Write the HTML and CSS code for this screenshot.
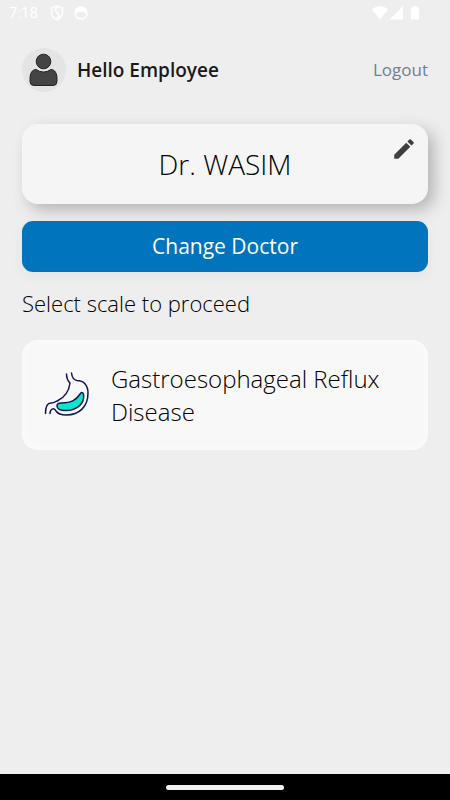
FILE: index.html
```html
<!DOCTYPE html>
<html lang="en">
<head>
  <meta charset="utf-8">
  <meta name="viewport" content="width=device-width, initial-scale=1">
  <title>Select scale</title>
  <link rel="stylesheet" href="styles.css">
</head>
<body>
  <div class="status-bar">
    <div class="status-group">
      <span class="clock">7:18</span>
      <svg class="shield" width="14" height="16" viewBox="0 0 14 16" aria-hidden="true">
        <path d="M7 1 12.500 3v4.500c0 3.400-2.200 5.800-5.500 7.300-3.300-1.500-5.500-3.900-5.500-7.300V3z" fill="none" stroke="#fff" stroke-width="1.500"/>
        <path d="M8 2C4.500 3.500 4.500 5.500 7 7.500s3 4 0 6" fill="none" stroke="#fff" stroke-width="1.500"/>
      </svg>
      <svg width="14" height="14" viewBox="0 0 14 14" aria-hidden="true">
        <circle cx="7" cy="7" r="6.200" fill="none" stroke="#fff" stroke-width="1.300"/>
        <path d="M1 6C1.500 2.500 4 1 7 1s5.500 1.500 6 5l-1.500 1.500-1.500-1-1-1.500-1 1H6L5 5 4 6.500l-1.500 1z" fill="#fff"/>
        <path d="M3.500 11.500c2 1.500 5 1.500 7 0" fill="none" stroke="#fff" stroke-width="1.300"/>
      </svg>
    </div>
    <div class="status-group">
      <svg width="48" height="14" viewBox="0 0 48 14" aria-hidden="true">
        <path d="M0 3.500C4.500-1 11.500-1 16 3.500L8 13.500zM31 0v13.500H17.500zM41 0h4v1.500h2v12h-8V1.500h2z" fill="#fff"/>
      </svg>
    </div>
  </div>

  <main class="screen">
    <header class="profile">
      <svg width="44" height="44" viewBox="0 0 44 44" aria-hidden="true">
        <circle cx="22" cy="22" r="22" fill="#e4e4e4"/>
        <circle cx="21.500" cy="13.500" r="7.300" fill="#444" stroke="#222"/>
        <path d="M14 21.500q7.500 5 15 0c4 0 6 4 6 9v3q0 4-4 4H12q-4 0-4-4v-3c0-5 2-9 6-9z" fill="#444" stroke="#222"/>
      </svg>
      <h1 class="greeting">Hello Employee</h1>
      <a class="logout" href="#">Logout</a>
    </header>

    <section class="doctor-card">
      <h2 class="doctor-name">Dr. WASIM</h2>
      <button class="edit" type="button" aria-label="Edit doctor">
        <svg width="26" height="26" viewBox="0 0 24 24" aria-hidden="true">
          <path d="M3 17.250V21h3.750L17.810 9.940l-3.750-3.750zM20.710 7.040a1 1 0 0 0 0-1.410l-2.340-2.340a1 1 0 0 0-1.410 0l-1.830 1.830 3.750 3.750z" fill="#3f3f3f"/>
        </svg>
      </button>
    </section>

    <button class="change" type="button">Change Doctor</button>
    <h2 class="prompt">Select scale to proceed</h2>

    <a class="scale-card" href="#">
      <svg width="46" height="46" viewBox="0 0 46 46" fill="none" stroke="#14174d" stroke-width="1.500" stroke-linecap="round" stroke-linejoin="round" aria-hidden="true">
        <path d="M22.500 2c0 5 1.500 7 3.500 9-1 8-6 14.500-12 17.500-3 1.500-4 2.500-7 2.500C3 31 1.500 35 1.500 41.500"/>
        <path d="M27.500 1c.5 4 2 7 5.500 7.500 7 0 11 5 11 12.500C44 34 36 43 22 43c-5 0-8-1-10-4-2-4-6-2-6 2.500"/>
        <path d="M39.500 22c1.500 9-6 16.500-17.500 16.500-5 0-9-1.500-9-4.500 0-2 2-3 4-3 11 0 15-3 19.500-9.500 1-1.500 2.500-1 3 .5z" fill="#08e8cf"/>
      </svg>
      <span class="scale-name">Gastroesophageal Reflux Disease</span>
    </a>
  </main>

  <footer class="nav-bar"><span class="nav-handle"></span></footer>
</body>
</html>
```
FILE: styles.css
```css
* {
  box-sizing: border-box;
}

body {
  display: flex;
  flex-direction: column;
  min-height: 100vh;
  margin: 0;
  background: #eee;
  color: #000;
  font-family: "Open Sans", "Noto Sans", sans-serif;
  font-weight: 300;
}

h1,
h2 {
  margin: 0;
}

svg {
  display: block;
  flex: none;
}

a {
  color: inherit;
  text-decoration: none;
}

button {
  padding: 0;
  border: 0;
  font: inherit;
  cursor: pointer;
}

.status-bar {
  display: flex;
  justify-content: space-between;
  align-items: center;
  height: 26px;
  padding: 0 30px 0 9px;
  color: #fff;
}

.status-group {
  display: flex;
  align-items: center;
  gap: 10px;
}

.clock {
  font: 400 15px/20px Roboto, sans-serif;
}

.shield {
  margin-left: 2px;
}

.screen {
  flex: 1;
  padding: 22px 22px 24px;
}

.profile {
  display: flex;
  align-items: center;
  height: 44px;
}

.greeting {
  flex: 1;
  margin-left: 11px;
  color: #1a1a1a;
  font-size: 19px;
  font-weight: 600;
  line-height: 26px;
}

.logout {
  color: #708090;
  font-size: 17px;
  font-weight: 400;
  line-height: 24px;
}

.doctor-card {
  position: relative;
  margin-top: 32px;
  padding: 20px;
  border-radius: 16px;
  background: #f5f5f5;
  box-shadow: 6px 6px 16px #b4b4b4, -6px -6px 16px #f0f0f0;
  text-align: center;
}

.doctor-name {
  font-size: 28px;
  font-weight: 300;
  line-height: 40px;
}

.edit {
  position: absolute;
  top: 12px;
  right: 11px;
  background: none;
}

.change {
  position: relative;
  display: block;
  width: 100%;
  margin-top: 17px;
  border-radius: 11px;
  background: #0075be;
  box-shadow: 0 3px 12px #e6e2e2;
  color: #fff;
  font-size: 21px;
  font-weight: 400;
  line-height: 51px;
}

.prompt {
  margin-top: 16px;
  font-size: 22px;
  font-weight: 300;
  line-height: 30px;
}

.scale-card {
  display: flex;
  align-items: center;
  gap: 21px;
  margin-top: 22px;
  padding: 22px;
  border-radius: 16px;
  background: #f8f8f8;
  box-shadow: inset 0 0 8px #fcfcfc;
}

.scale-name {
  font-size: 24px;
  line-height: 33px;
}

.nav-bar {
  display: flex;
  justify-content: center;
  align-items: center;
  height: 26px;
  background: #000;
}

.nav-handle {
  width: 118px;
  height: 5px;
  border-radius: 3px;
  background: #f2f2f2;
}
```
